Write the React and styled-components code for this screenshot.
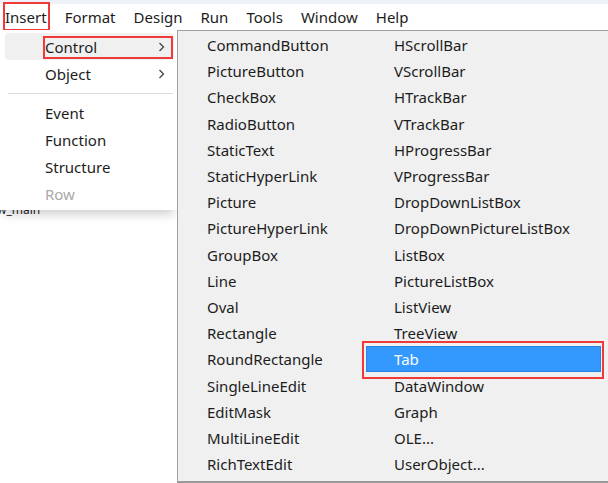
import React from "react";
import styled, { createGlobalStyle } from "styled-components";

const Global = createGlobalStyle`
  html, body {
    margin: 0;
    padding: 0;
    background: #ffffff;
  }
  body {
    font-family: "Noto Sans", "Open Sans", sans-serif;
  }
`;

const Screen = styled.div`
  position: relative;
  width: 608px;
  height: 483px;
  overflow: hidden;
  background: #ffffff;
`;

const TopStrip = styled.div`
  height: 4px;
  background: #eef1f7;
`;

const MenuBar = styled.div`
  display: flex;
  align-items: center;
  gap: 18px;
  height: 26px;
  padding-left: 5px;
  background: #ffffff;
  font-size: 15px;
  color: #1c1c1c;
`;

const BarItem = styled.div`
  position: relative;
  line-height: 26px;
`;

const RedBox = styled.div`
  position: absolute;
  border: 2px solid #f03a3a;
  pointer-events: none;
`;

const Workspace = styled.div`
  padding-top: 173px;
`;

const Label = styled.div`
  margin-left: -3px;
  font-size: 12px;
  line-height: 14px;
  color: #222;
`;

const DropMenu = styled.div`
  position: absolute;
  left: 0;
  top: 30px;
  width: 177px;
  padding: 3px 0;
  background: #ffffff;
  box-shadow: 0 7px 10px -3px rgba(0, 0, 0, 0.2);
  font-size: 15px;
`;

const DropItem = styled.div`
  position: relative;
  display: flex;
  align-items: center;
  justify-content: space-between;
  height: 27px;
  margin: 0 3px 0 5px;
  padding: 0 9px 0 40px;
  border-radius: 4px;
  background: ${(p) => (p.$hover ? "#f0f0f0" : "transparent")};
  color: ${(p) => (p.$disabled ? "#a9a9a9" : "#1c1c1c")};
`;

const Separator = styled.div`
  height: 1px;
  margin: 6px 4px 5px 8px;
  background: #dcdcdc;
`;

const SubMenu = styled.div`
  position: absolute;
  left: 177px;
  top: 30px;
  width: 427px;
  height: 449px;
  padding: 1px 4px 0 2px;
  background: #f0f0f0;
  border: 1px solid #a0a0a0;
  border-right: 2px solid #8c8c8c;
  border-bottom: 2px solid #9a9a9a;
  display: grid;
  grid-template-columns: 186px 235px;
  grid-template-rows: repeat(17, 26.2px);
  grid-auto-flow: column;
  font-size: 15px;
`;

const SubItem = styled.div`
  position: relative;
  display: flex;
  align-items: center;
  padding-left: ${(p) => (p.$col === 1 ? 27 : 28)}px;
  background: ${(p) => (p.$active ? "#3399ff" : "transparent")};
  box-shadow: ${(p) => (p.$active ? "inset 0 0 0 1px #2b84e0" : "none")};
  color: ${(p) => (p.$active ? "#ffffff" : "#1c1c1c")};
  white-space: nowrap;
`;

const Chevron = () => (
  <svg width="7" height="10" viewBox="0 0 7 10">
    <polyline points="1.5,1 5.5,5 1.5,9" fill="none" stroke="#444" strokeWidth="1.3" />
  </svg>
);

const barItems = ["Insert", "Format", "Design", "Run", "Tools", "Window", "Help"];

const col1 = [
  "CommandButton", "PictureButton", "CheckBox", "RadioButton", "StaticText",
  "StaticHyperLink", "Picture", "PictureHyperLink", "GroupBox", "Line", "Oval",
  "Rectangle", "RoundRectangle", "SingleLineEdit", "EditMask", "MultiLineEdit",
  "RichTextEdit",
];

const col2 = [
  "HScrollBar", "VScrollBar", "HTrackBar", "VTrackBar", "HProgressBar",
  "VProgressBar", "DropDownListBox", "DropDownPictureListBox", "ListBox",
  "PictureListBox", "ListView", "TreeView", "Tab", "DataWindow", "Graph",
  "OLE...", "UserObject...",
];

export default function App() {
  return (
    <Screen>
      <Global />
      <TopStrip />
      <MenuBar>
        {barItems.map((name) => (
          <BarItem key={name}>
            {name}
            {name === "Insert" && (
              <RedBox style={{ left: -2, right: -3, top: -2, bottom: -1 }} />
            )}
          </BarItem>
        ))}
      </MenuBar>
      <Workspace>
        <Label>w_main</Label>
      </Workspace>

      <DropMenu>
        <DropItem $hover>
          Control
          <Chevron />
          <RedBox style={{ left: 38, width: 126, top: 3, height: 19 }} />
        </DropItem>
        <DropItem>
          Object
          <Chevron />
        </DropItem>
        <Separator />
        <DropItem>Event</DropItem>
        <DropItem>Function</DropItem>
        <DropItem>Structure</DropItem>
        <DropItem $disabled>Row</DropItem>
      </DropMenu>

      <SubMenu>
        {col1.map((name) => (
          <SubItem key={name} $col={1}>
            {name}
          </SubItem>
        ))}
        {col2.map((name) => (
          <SubItem key={name} $col={2} $active={name === "Tab"}>
            {name}
            {name === "Tab" && (
              <RedBox style={{ left: -4, right: -3, top: -5, bottom: -7 }} />
            )}
          </SubItem>
        ))}
      </SubMenu>
    </Screen>
  );
}
